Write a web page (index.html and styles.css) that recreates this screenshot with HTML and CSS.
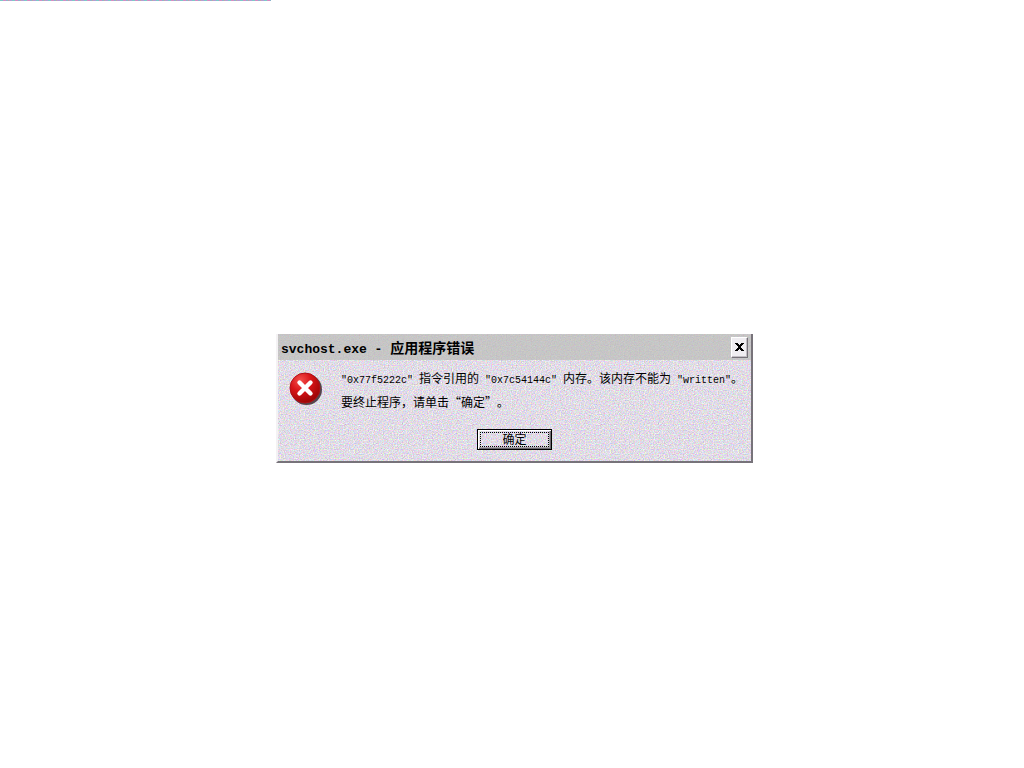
FILE: index.html
```html
<!DOCTYPE html>
<html lang="zh-CN">
<head>
  <meta charset="UTF-8">
  <meta name="viewport" content="width=device-width, initial-scale=1.0">
  <title>svchost.exe - 应用程序错误</title>
  <link rel="stylesheet" href="styles.css">
</head>
<body>
  <div class="strip"></div>

  <main class="desktop">
    <section class="dialog" role="alertdialog" aria-labelledby="title" aria-describedby="message">
      <header class="title-bar">
        <h1 class="title" id="title"><span class="latin">svchost.exe - </span>应用程序错误</h1>
        <button class="close" type="button" aria-label="关闭">
          <svg width="9" height="8" viewBox="0 0 9 8" shape-rendering="crispEdges">
            <path d="M0 0h3v1h1v1h1v-1h1v-1h3v1h-1v1h-1v1h-1v2h1v1h1v1h1v1h-3v-1h-1v-1h-1v1h-1v1h-3v-1h1v-1h1v-1h1v-2h-1v-1h-1v-1h-1z" fill="#000"/>
          </svg>
        </button>
      </header>

      <div class="content">
        <svg class="icon" width="34" height="34" viewBox="0 0 34 34" aria-hidden="true">
          <defs>
            <radialGradient id="red" cx="0.35" cy="0.25" r="0.8">
              <stop offset="0" stop-color="#f4504c"/>
              <stop offset="0.45" stop-color="#d81418"/>
              <stop offset="1" stop-color="#960404"/>
            </radialGradient>
          </defs>
          <circle cx="17.5" cy="17.5" r="15.5" fill="#55464c"/>
          <circle cx="16" cy="16" r="15" fill="url(#red)" stroke="#b01018"/>
          <path d="M10.5 10.5L21.5 21.5M21.5 10.5L10.5 21.5" stroke="#fff" stroke-width="4.4" stroke-linecap="round"/>
        </svg>
        <div class="message" id="message">
          <p><span class="latin">"0x77f5222c" </span>指令引用的<span class="latin"> "0x7c54144c" </span>内存。该内存不能为<span class="latin"> "written"</span>。</p>
          <p>要终止程序，请单击“确定”。</p>
        </div>
      </div>

      <div class="actions">
        <button class="ok" type="button"><span class="focus">确定</span></button>
      </div>
    </section>
  </main>
</body>
</html>
```

FILE: styles.css
```css
* {
  box-sizing: border-box;
}

body {
  margin: 0;
  min-height: 100vh;
  display: flex;
  flex-direction: column;
  background: #fff;
  color: #000;
  font-family: "Noto Sans CJK SC", sans-serif;
  font-size: 12px;
  text-spacing-trim: space-all;
}

.strip {
  width: 271px;
  height: 1px;
  background: repeating-linear-gradient(90deg, #7cc8c8 0 3px, #d48cc4 3px 6px, #8cb4cc 6px 8px, #c8a49c 8px 9px, #b49cd4 9px 12px);
}

.desktop {
  flex: 1;
  display: flex;
  align-items: center;
  justify-content: center;
  padding: 28px 0 0 5px;
}

/* dithered grey surface */
.dialog {
  width: 477px;
  border: solid;
  border-width: 0 2px 2px;
  border-color: #fff #77737a #77737a #f4f2f4;
  background: #dcd8e0 url("data:image/svg+xml,%3Csvg xmlns='http://www.w3.org/2000/svg' width='128' height='128'%3E%3Cfilter id='n' x='0' y='0' width='1' height='1' color-interpolation-filters='sRGB'%3E%3CfeTurbulence type='fractalNoise' baseFrequency='.8' numOctaves='2' stitchTiles='stitch'/%3E%3CfeColorMatrix values='.5 0 0 0 .63 0 .5 0 0 .61 0 0 .5 0 .65 0 0 0 0 1'/%3E%3C/filter%3E%3Crect width='128' height='128' filter='url(%23n)'/%3E%3C/svg%3E");
}

.title-bar {
  display: flex;
  align-items: center;
  justify-content: space-between;
  height: 26px;
  padding: 0 3px;
  background: rgba(186, 188, 184, 0.7);
}

.title {
  margin: 0;
  font-size: 14px;
  line-height: 24px;
  font-weight: bold;
  white-space: pre;
}

.latin {
  font-family: "Liberation Mono", monospace;
  font-size: 10px;
  line-height: 12px;
  white-space: pre;
}

.title .latin {
  font-size: 13px;
}

.close {
  display: flex;
  align-items: center;
  justify-content: center;
  width: 17px;
  height: 21px;
  padding: 0;
  border: 1px solid;
  border-color: #fff #77737a #77737a #fff;
  background: #efedf1;
  box-shadow: inset -1px -1px #c2bec4;
}

.content {
  display: flex;
  align-items: flex-start;
  gap: 18px;
  padding: 6px 11px 0;
}

.icon {
  flex: none;
  margin-top: 6px;
}

.message p {
  margin: 0;
  line-height: 24px;
  white-space: nowrap;
}

.actions {
  display: flex;
  justify-content: center;
  padding: 15px 0 11px;
}

.ok {
  width: 75px;
  height: 21px;
  padding: 2px;
  border: 1px solid #000;
  background: transparent;
  box-shadow: inset 1px 1px #fff, inset -1px -1px #6c686e, inset -2px -2px #a8a4aa;
  color: #000;
  font-family: inherit;
  font-size: 12px;
}

.focus {
  display: block;
  height: 15px;
  border: 1px dotted #000;
  line-height: 11px;
}
```
